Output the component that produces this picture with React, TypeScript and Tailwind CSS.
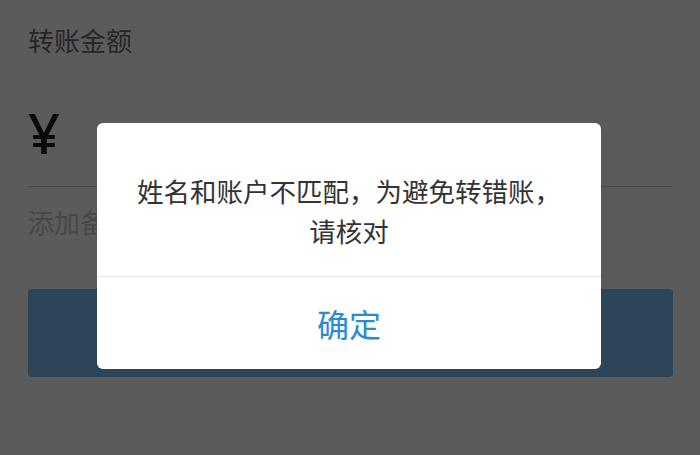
import React from "react";

export default function App() {
  const cjk = { fontFamily: '"Noto Sans CJK SC", "Noto Sans", sans-serif' };
  return (
    <div className="relative w-[700px] h-[455px] overflow-hidden bg-[#5b5b5b]" style={cjk}>
      <div className="flex flex-col px-[28px] pt-[27px]">
        <div className="text-[26px] leading-[26px] text-[#262626]">转账金额</div>
        <div
          className="mt-[51px] text-[56px] leading-[56px] font-medium text-[#0a0a0a]"
          style={{ fontFamily: '"Noto Sans", sans-serif' }}
        >
          ¥
        </div>
        <div className="mt-[26px] h-px w-[644px] bg-[#474747]" />
        <div className="mt-[22px] text-[26px] leading-[26px] text-[#474747]">添加备注</div>
        <div className="mt-[54px] h-[88px] w-[645px] rounded-[4px] bg-[#2c4558]" />
      </div>

      <div className="absolute left-[97px] top-[123px] w-[504px] rounded-[6px] bg-white flex flex-col">
        <div className="pt-[48px] pb-[25px] px-[20px] text-center text-[26.5px] leading-[40px] text-[#333333]">
          姓名和账户不匹配，为避免转错账，
          <br />
          请核对
        </div>
        <div className="h-px bg-[#e6e6e6]" />
        <div className="h-[92px] flex items-center justify-center text-[32px] leading-[32px] text-[#2b8bd1]">
          确定
        </div>
      </div>
    </div>
  );
}
